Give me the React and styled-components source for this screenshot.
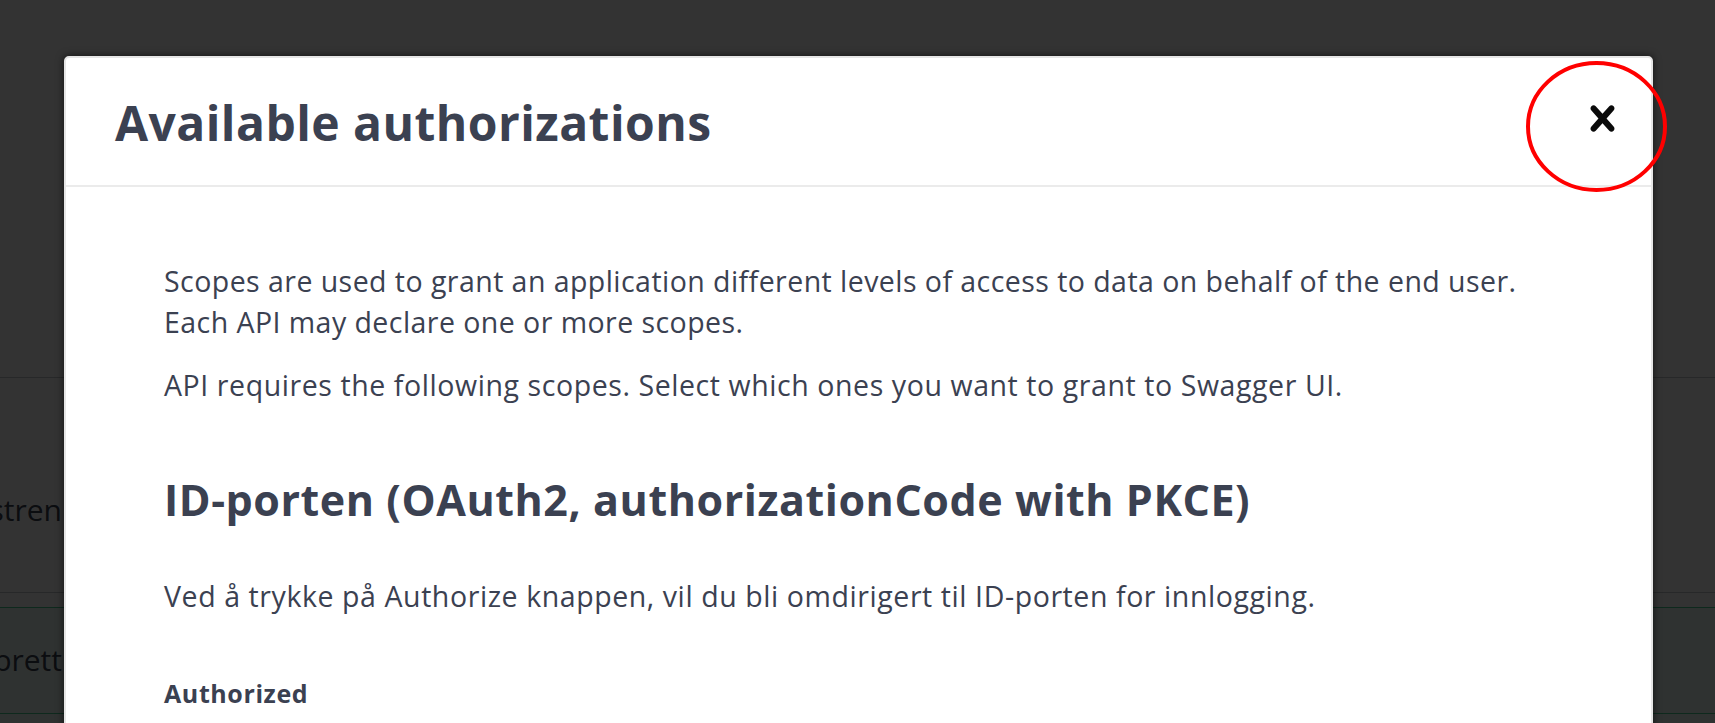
import React from 'react';
import styled, { createGlobalStyle } from 'styled-components';

const Global = createGlobalStyle`
  html, body { margin: 0; padding: 0; background: #fff; overflow: hidden; }
  body { font-family: "Open Sans", "Noto Sans", sans-serif; }
  * { box-sizing: border-box; }
`;

const Page = styled.div`
  position: relative;
  width: 1715px;
  height: 723px;
  overflow: hidden;
  background: #fff;
  color: #3b4151;
`;

const InfoArea = styled.div`
  height: 378px;
  border-bottom: 1px solid rgba(59, 65, 81, 0.3);
`;

const TagRow = styled.div`
  height: 215px;
  padding-top: 112px;
  border-bottom: 1px solid rgba(59, 65, 81, 0.3);
`;

const Clip = styled.div`
  width: 62px;
  overflow: hidden;
  display: flex;
  justify-content: flex-end;
  white-space: nowrap;
  font-size: 30px;
  line-height: 40px;
  color: #3b4151;
`;

const Opblock = styled.div`
  margin-top: 14px;
  border-top: 1px solid #49cc90;
  background: rgba(73, 204, 144, 0.1);
  height: 200px;
`;

const Summary = styled.div`
  height: 106px;
  padding-top: 32px;
  border-bottom: 1px solid #49cc90;
`;

const Backdrop = styled.div`
  position: absolute;
  inset: 0;
  background: rgba(0, 0, 0, 0.8);
  padding: 56px 0 0 64px;
  overflow: hidden;
`;

const Modal = styled.div`
  width: 1589px;
  min-height: 720px;
  background: #fff;
  border: 2px solid #e6e6e6;
  border-radius: 5px;
  box-shadow: 0 0 7px 1px rgba(0, 0, 0, 0.5);
`;

const Header = styled.div`
  height: 129px;
  display: flex;
  justify-content: space-between;
  align-items: flex-start;
  padding: 33px 23px 0 49px;
  border-bottom: 2px solid #ebebeb;
`;

const Title = styled.h3`
  margin: 0;
  font-size: 48px;
  line-height: 64px;
  font-weight: 700;
  letter-spacing: 0.45px;
  color: #3b4151;
`;

const CloseButton = styled.button`
  margin-top: 2px;
  width: 51px;
  height: 51px;
  padding: 0;
  border: none;
  background: none;
  cursor: pointer;
  display: flex;
  svg { width: 51px; height: 51px; fill: #0a0a0a; }
`;

const Body = styled.div`
  display: flex;
  flex-direction: column;
  align-items: flex-start;
  padding: 74px 0 0 98px;
`;

const Text = styled.p`
  margin: ${(p) => p.$top || 0}px 0 0;
  font-size: 28.5px;
  line-height: 41px;
  letter-spacing: ${(p) => p.$spacing || 0.45}px;
  color: #3b4151;
  white-space: nowrap;
`;

const SchemeTitle = styled.h4`
  margin: ${(p) => p.$top || 0}px 0 0;
  font-size: 43px;
  line-height: 50px;
  font-weight: 700;
  letter-spacing: 0.56px;
  color: #3b4151;
  white-space: nowrap;
`;

const Label = styled.h6`
  margin: ${(p) => p.$top || 0}px 0 0;
  font-size: 25px;
  line-height: 30px;
  font-weight: 700;
  letter-spacing: 0.6px;
  color: #3b4151;
`;

const Annotation = styled.svg`
  position: absolute;
  left: 1526px;
  top: 61px;
  width: 141px;
  height: 131px;
  pointer-events: none;
`;

export default function App() {
  return (
    <>
      <Global />
      <Page>
        <InfoArea />
        <TagRow>
          <Clip>Registren</Clip>
        </TagRow>
        <Opblock>
          <Summary>
            <Clip>Opprett</Clip>
          </Summary>
        </Opblock>
        <Backdrop>
          <Modal role="dialog" aria-label="Available authorizations">
            <Header>
              <Title>Available authorizations</Title>
              <CloseButton aria-label="Close">
                <svg viewBox="0 0 20 20" aria-hidden="true">
                  <path d="M14.348 14.849c-.469.469-1.229.469-1.697 0L10 11.819l-2.651 3.029c-.469.469-1.229.469-1.697 0-.469-.469-.469-1.229 0-1.697l2.758-3.15-2.759-3.152c-.469-.469-.469-1.228 0-1.697.469-.469 1.228-.469 1.697 0L10 8.183l2.651-3.031c.469-.469 1.228-.469 1.697 0 .469.469.469 1.229 0 1.697l-2.758 3.152 2.758 3.15c.469.469.469 1.229 0 1.698z" />
                </svg>
              </CloseButton>
            </Header>
            <Body>
              <Text>
                Scopes are used to grant an application different levels of access to data on behalf of the end user.
                <br />
                Each API may declare one or more scopes.
              </Text>
              <Text $top={22} $spacing={0.58}>API requires the following scopes. Select which ones you want to grant to Swagger UI.</Text>
              <SchemeTitle $top={69}>ID-porten (OAuth2, authorizationCode with PKCE)</SchemeTitle>
              <Text $top={51} $spacing={0.58}>Ved å trykke på Authorize knappen, vil du bli omdirigert til ID-porten for innlogging.</Text>
              <Label $top={61}>Authorized</Label>
            </Body>
          </Modal>
        </Backdrop>
        <Annotation viewBox="0 0 141 131" aria-hidden="true">
          <ellipse cx="70.5" cy="65.5" rx="68.5" ry="63.5" fill="none" stroke="#ff0000" strokeWidth="4" />
        </Annotation>
      </Page>
    </>
  );
}
